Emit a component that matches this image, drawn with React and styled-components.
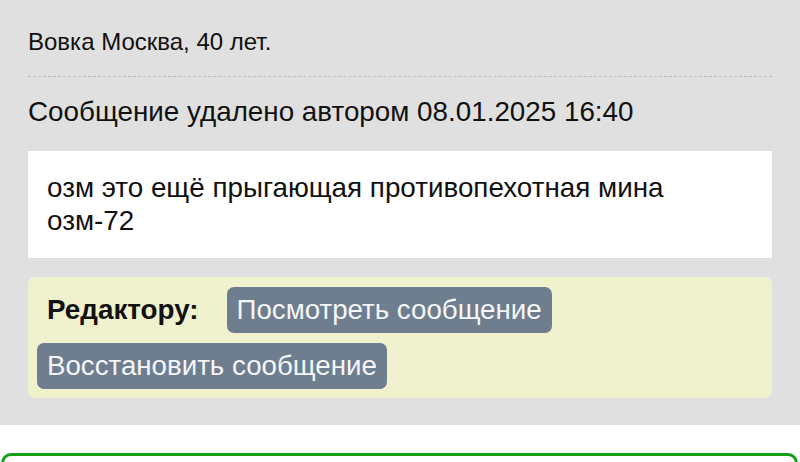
import React from 'react'
import styled, { createGlobalStyle } from 'styled-components'

const GlobalStyle = createGlobalStyle`
  body {
    margin: 0;
    background: #fff;
    font-family: "Liberation Sans", Arial, sans-serif;
    color: #111;
  }
`

const Panel = styled.div`
  background: #e0e0e0;
  padding: 28px 28px 27px;
`

const Author = styled.div`
  font-size: 24px;
  line-height: 28px;
  padding-bottom: 20px;
  border-bottom: 1px dashed #bdbdbd;
`

const Heading = styled.div`
  font-size: 27.8px;
  line-height: 34px;
  margin: 18px 0 22px;
`

const MessageBox = styled.div`
  background: #fff;
  padding: 20px 19px 21px;
  font-size: 27.8px;
  line-height: 33px;
`

const EditorBox = styled.div`
  margin-top: 19px;
  background: #eff2cc;
  border-radius: 7px;
  padding: 10px 9px 9px;
  display: flex;
  flex-wrap: wrap;
  align-items: center;
  gap: 10px;
`

const Label = styled.span`
  font-weight: bold;
  font-size: 27.8px;
  margin: 0 18px 0 10px;
`

const Button = styled.button`
  border: none;
  border-radius: 7px;
  background: #6e7e8f;
  color: #f4f6f8;
  font-family: inherit;
  font-size: 27.7px;
  line-height: 32px;
  padding: 7px 10px;
`

const NextCard = styled.div`
  margin: 28px 2px 0 1px;
  border: 3px solid #12a012;
  border-radius: 10px;
  height: 60px;
`

export default function App() {
  return (
    <>
      <GlobalStyle />
      <Panel>
        <Author>Вовка Москва, 40 лет.</Author>
        <Heading>Сообщение удалено автором 08.01.2025 16:40</Heading>
        <MessageBox>
          озм это ещё прыгающая противопехотная мина
          <br />
          озм-72
        </MessageBox>
        <EditorBox>
          <Label>Редактору:</Label>
          <Button>Посмотреть сообщение</Button>
          <Button>Восстановить сообщение</Button>
        </EditorBox>
      </Panel>
      <NextCard />
    </>
  )
}
